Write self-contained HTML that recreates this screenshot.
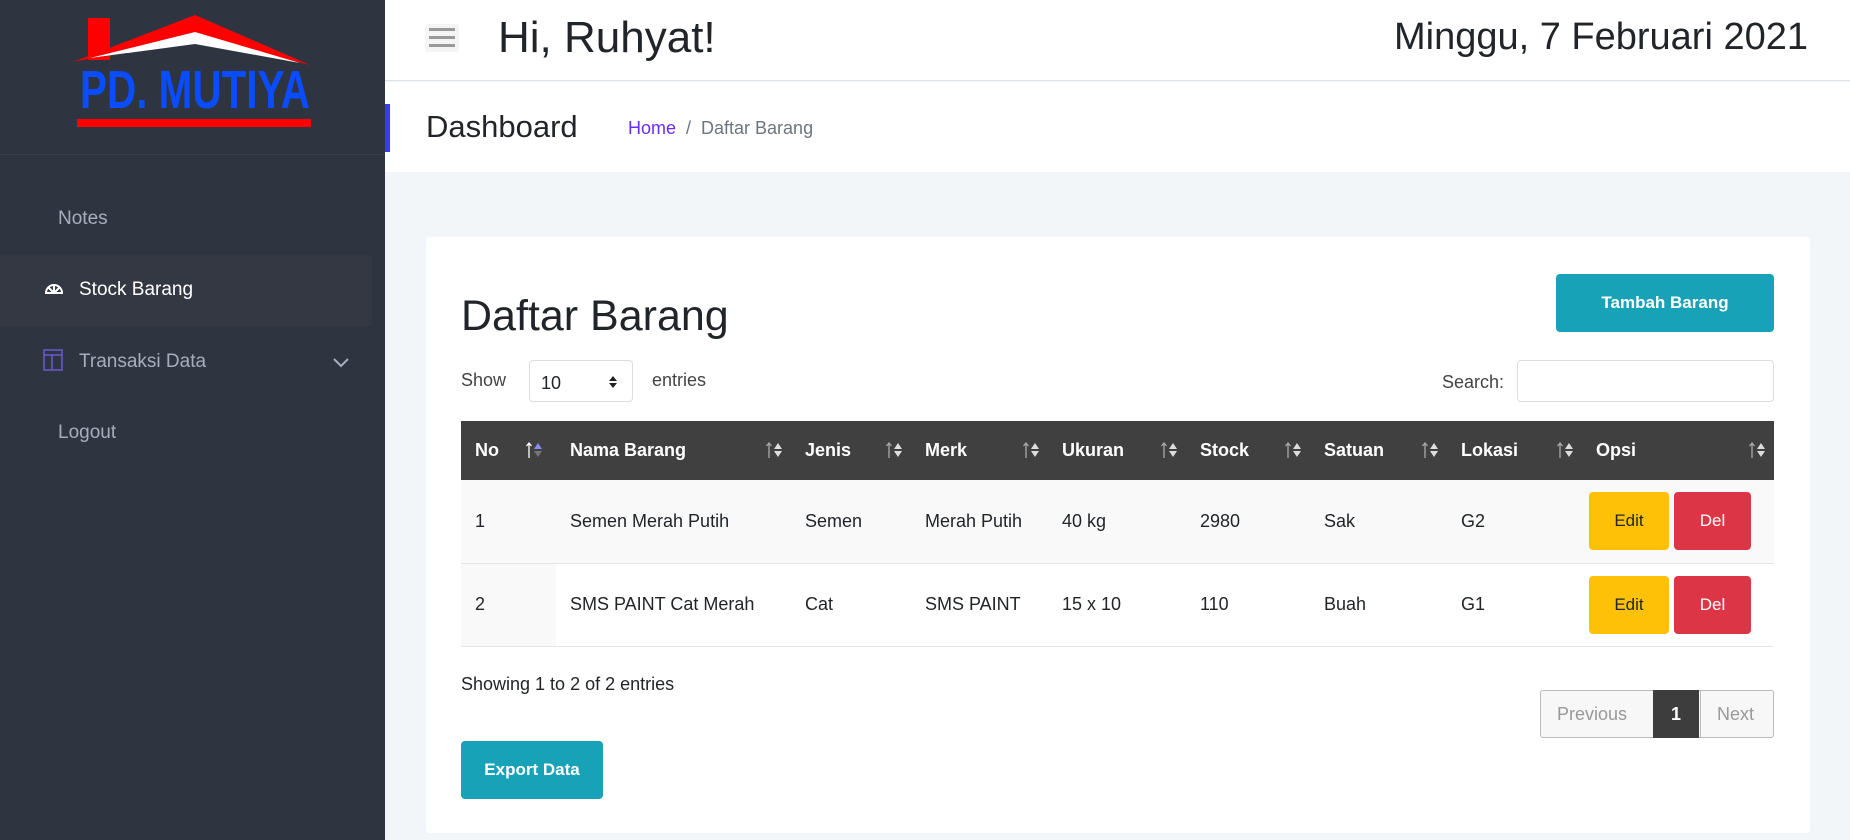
<!DOCTYPE html>
<html><head><meta charset="utf-8"><style>
*{box-sizing:border-box;margin:0;padding:0}
body{width:1850px;height:840px;overflow:hidden;font-family:"Liberation Sans",Arial,sans-serif;background:#f2f6f9;position:relative;color:#212529}
.sb{position:absolute;left:0;top:0;width:385px;height:840px;background:#2f3540}
.sb .div{position:absolute;left:0;top:154px;width:385px;height:1px;background:#3a414d}
.nav{position:absolute;font-size:19px;color:#a6adbc}
.act{position:absolute;left:0;top:255px;width:372px;height:71px;background:#333842}
.hdr{position:absolute;left:385px;top:0;width:1465px;height:81px;background:#fff;border-bottom:1px solid #dfe3e8}
.bc{position:absolute;left:385px;top:82px;width:1465px;height:90px;background:#fff}
.card{position:absolute;left:426px;top:237px;width:1384px;height:596px;background:#fff;border-radius:4px}
.abs{position:absolute}
table{position:absolute;left:35px;top:184px;width:1313px;border-collapse:collapse;font-size:18px}
th{background:#404040;color:#fff;height:59px;text-align:left;font-weight:bold;padding-left:14px;position:relative}
th svg{position:absolute;right:8px;top:20px}
td{height:83px;padding-left:14px;border-bottom:1px solid #e3e6ea}
tr.o td{background:#f9f9f9}
td.n{background:#f1f1f1}
tr.e td.n{background:#f9f9f9}
.btn{display:inline-block;height:58px;line-height:58px;text-align:center;border-radius:4px;font-size:17px}
</style></head><body>
<svg width="0" height="0" style="position:absolute"><defs>
<g id="si"><path d="M4 2V17M1.5 5L4 2L6.5 5" stroke="#aaa" stroke-width="1.3" fill="none"/><path d="M9 8L13 2L17 8Z" fill="#ddd"/><path d="M9 10L13 16L17 10Z" fill="#ddd"/></g>
<g id="si2"><path d="M4 2V17M1.5 5L4 2L6.5 5" stroke="#fff" stroke-width="1.3" fill="none"/><path d="M9 8L13 2L17 8Z" fill="#8a8cf0"/><path d="M9 10L13 16L17 10Z" fill="#777"/></g>
</defs></svg>
<div class="sb">
<svg class="abs" style="left:0;top:0" width="385" height="150">
<rect x="88" y="18" width="22" height="42" fill="#f00"/>
<polygon points="73,62 195,15 310,65 195,36" fill="#f00"/>
<polygon points="90,58 195,32 300,63 195,44" fill="#fff"/>
<text x="80" y="108" font-family="Liberation Sans" font-weight="bold" font-size="54" fill="#0a4cff" textLength="230" lengthAdjust="spacingAndGlyphs">PD. MUTIYA</text>
<rect x="77" y="119" width="234" height="8" fill="#f00"/>
</svg>
<div class="div"></div>
<div class="nav" style="left:58px;top:208px">Notes</div>
<div class="act"></div>
<svg class="abs" style="left:44px;top:281px" width="20" height="14" viewBox="0 0 20 14"><path d="M2 12 A8 8 0 0 1 18 12 Z M10 4 V12 M5 7 L10 12 M15 7 L10 12" fill="none" stroke="#fff" stroke-width="2"/></svg>
<div class="nav" style="left:79px;top:279px;color:#fff">Stock Barang</div>
<svg class="abs" style="left:43px;top:349px" width="20" height="22"><rect x="1" y="1" width="18" height="20" fill="none" stroke="#6a5acd" stroke-width="1.5"/><path d="M1 6H19M9 6V21" stroke="#6a5acd" stroke-width="1.5"/></svg>
<div class="nav" style="left:79px;top:351px">Transaksi Data</div>
<svg class="abs" style="left:333px;top:358px" width="16" height="10"><path d="M1 1L8 8L15 1" fill="none" stroke="#a6adbc" stroke-width="2"/></svg>
<div class="nav" style="left:58px;top:422px">Logout</div>
</div>
<div class="hdr">
<div class="abs" style="left:40px;top:24px;width:34px;height:28px;background:#f4f4f4;border-radius:3px"></div>
<div class="abs" style="left:44px;top:28px;width:26px;height:3px;background:#999;box-shadow:0 8px 0 #999,0 16px 0 #999"></div>
<div class="abs" style="left:113px;top:13px;font-size:44px">Hi, Ruhyat!</div>
<div class="abs" style="right:42px;top:16px;font-size:38px">Minggu, 7 Februari 2021</div>
</div>
<div class="bc">
<div class="abs" style="left:0;top:22px;width:5px;height:48px;background:#3b3bf0"></div>
<div class="abs" style="left:41px;top:27px;font-size:31px">Dashboard</div>
<div class="abs" style="left:243px;top:36px;font-size:18px;color:#6c2cf0">Home <span style="color:#6c757d">&nbsp;/&nbsp; Daftar Barang</span></div>
</div>
<div class="card">
<div class="abs" style="left:35px;top:55px;font-size:43px">Daftar Barang</div>
<div class="abs btn" style="left:1130px;top:37px;width:218px;background:#17a2b8;color:#fff;font-weight:bold">Tambah Barang</div>
<div class="abs" style="left:35px;top:133px;font-size:18px;color:#444">Show</div>
<div class="abs" style="left:103px;top:123px;width:104px;height:42px;border:1px solid #ddd;border-radius:4px;font-size:18px;padding:12px 0 0 11px">10<svg style="position:absolute;right:14px;top:14px" width="10" height="14"><path d="M1 6L5 1L9 6Z M1 8L5 13L9 8Z" fill="#222"/></svg></div>
<div class="abs" style="left:226px;top:133px;font-size:18px;color:#444">entries</div>
<div class="abs" style="left:1016px;top:135px;font-size:18px;color:#444">Search:</div>
<div class="abs" style="left:1091px;top:123px;width:257px;height:42px;border:1px solid #ddd;border-radius:4px"></div>
<table>
<tr><th style="width:95px">No<svg width="18" height="18" style="right:auto;left:64px"><use href="#si2"/></svg></th><th style="width:235px">Nama Barang<svg width="18" height="18"><use href="#si"/></svg></th><th style="width:120px">Jenis<svg width="18" height="18"><use href="#si"/></svg></th><th style="width:137px">Merk<svg width="18" height="18"><use href="#si"/></svg></th><th style="width:138px">Ukuran<svg width="18" height="18"><use href="#si"/></svg></th><th style="width:124px">Stock<svg width="18" height="18"><use href="#si"/></svg></th><th style="width:137px">Satuan<svg width="18" height="18"><use href="#si"/></svg></th><th style="width:135px">Lokasi<svg width="18" height="18"><use href="#si"/></svg></th><th>Opsi<svg width="18" height="18"><use href="#si"/></svg></th></tr>
<tr class="o"><td class="n">1</td><td>Semen Merah Putih</td><td>Semen</td><td>Merah Putih</td><td>40 kg</td><td>2980</td><td>Sak</td><td>G2</td><td style="padding-left:7px"><span class="btn" style="width:80px;background:#ffc107">Edit</span> <span class="btn" style="width:77px;background:#dc3545;color:#fff">Del</span></td></tr>
<tr class="e"><td class="n">2</td><td>SMS PAINT Cat Merah</td><td>Cat</td><td>SMS PAINT</td><td>15 x 10</td><td>110</td><td>Buah</td><td>G1</td><td style="padding-left:7px"><span class="btn" style="width:80px;background:#ffc107">Edit</span> <span class="btn" style="width:77px;background:#dc3545;color:#fff">Del</span></td></tr>
</table>
<div class="abs" style="left:35px;top:437px;font-size:18px">Showing 1 to 2 of 2 entries</div>
<div class="abs" style="left:1114px;top:453px;width:234px;height:48px;border:1px solid #bbb;border-radius:3px;background:#f7f7f7;font-size:18px;color:#999">
<span class="abs" style="left:16px;top:13px">Previous</span>
<span class="abs" style="left:112px;top:-1px;width:46px;height:48px;background:#3d3d3d;color:#fff;font-weight:bold;text-align:center;line-height:48px">1</span>
<span class="abs" style="left:159px;top:0;width:1px;height:46px;background:#bbb"></span>
<span class="abs" style="left:176px;top:13px">Next</span></div>
<div class="abs btn" style="left:35px;top:504px;width:142px;background:#17a2b8;color:#fff;font-weight:bold">Export Data</div>
</div>
</body></html>
